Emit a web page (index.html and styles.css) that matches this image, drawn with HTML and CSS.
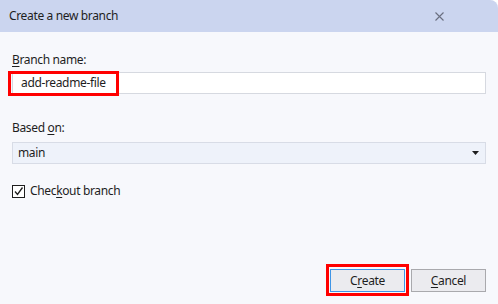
FILE: index.html
```html
<!DOCTYPE html>
<html>
<head>
<meta charset="utf-8">
<link rel="stylesheet" href="styles.css">
</head>
<body>
<div class="window">
  <div class="titlebar">
    <span class="title">Create a new branch</span>
    <svg class="close" width="9" height="9" viewBox="0 0 9 9"><path d="M0.5 0.5 L8.5 8.5 M8.5 0.5 L0.5 8.5" stroke="#6a6f80" stroke-width="1.1" fill="none"/></svg>
  </div>
  <div class="content">
    <div class="label first"><u>B</u>ranch name:</div>
    <div class="field-wrap">
      <div class="input">add-readme-file</div>
      <div class="highlight hl-input"></div>
    </div>
    <div class="label second">Based <u>o</u>n:</div>
    <div class="select">
      <span>main</span>
      <svg width="7" height="4" viewBox="0 0 7 4"><path d="M0 0 H7 L3.5 4 Z" fill="#1e1e1e"/></svg>
    </div>
    <label class="check">
      <span class="box"><svg width="11" height="11" viewBox="0 0 11 11"><path d="M2 5.5 L4.5 8.5 L9.5 1.5" stroke="#1e1e1e" stroke-width="1.3" fill="none"/></svg></span>
      <span>Chec<u>k</u>out branch</span>
    </label>
    <div class="spacer"></div>
    <div class="buttons">
      <div class="btn-wrap">
        <div class="btn primary">C<u>r</u>eate</div>
        <div class="highlight hl-btn"></div>
      </div>
      <div class="btn"><u>C</u>ancel</div>
    </div>
  </div>
</div>
</body>
</html>
```
FILE: styles.css
```css
html, body {
  margin: 0;
  padding: 0;
  background: #ffffff;
}
body {
  font-family: "Noto Sans", "Open Sans", sans-serif;
  font-size: 12px;
  letter-spacing: -0.35px;
  color: #1e1e1e;
}
.window {
  width: 498px;
  height: 304px;
  background: #f7f8fc;
  border-top-right-radius: 8px;
  overflow: hidden;
  display: flex;
  flex-direction: column;
}
.titlebar {
  height: 32px;
  flex: none;
  background: #cbd5ef;
  display: flex;
  align-items: center;
  justify-content: space-between;
  padding: 0 54px 0 9px;
}
.title {
  font-size: 12px;
  line-height: 16px;
}
.close {
  display: block;
}
.content {
  flex: 1;
  display: flex;
  flex-direction: column;
  padding: 0 12px 12px 12px;
}
.label {
  line-height: 16px;
}
.label.first {
  margin-top: 20px;
}
.label.second {
  margin-top: 26px;
}
u {
  text-decoration-thickness: 1px;
  text-underline-offset: 2px;
}
.field-wrap {
  position: relative;
  margin-top: 4px;
}
.input {
  height: 20px;
  border: 1px solid #d6d9e0;
  background: #ffffff;
  line-height: 20px;
  padding-left: 8px;
}
.highlight {
  position: absolute;
  border: 3px solid #ff0000;
  pointer-events: none;
}
.hl-input {
  left: -4px;
  top: -1px;
  width: 105px;
  height: 19px;
}
.select {
  margin-top: 6px;
  height: 20px;
  border: 1px solid #d8dce6;
  background: #eef2fa;
  display: flex;
  align-items: center;
  justify-content: space-between;
  padding: 0 6px 0 5px;
  line-height: 20px;
}
.check {
  margin-top: 19px;
  display: flex;
  align-items: center;
  gap: 5px;
  line-height: 16px;
}
.box {
  width: 11px;
  height: 11px;
  border: 1px solid #1e1e1e;
  background: #ffffff;
  display: block;
}
.box svg {
  display: block;
}
.spacer {
  flex: 1;
}
.buttons {
  display: flex;
  justify-content: flex-end;
  gap: 6px;
}
.btn-wrap {
  position: relative;
}
.btn {
  width: 73px;
  height: 21px;
  border: 1px solid #a9a9ad;
  background: #ebebef;
  display: flex;
  align-items: center;
  justify-content: center;
}
.btn.primary {
  border-color: #3f95e6;
}
.hl-btn {
  left: -4px;
  top: -5px;
  width: 77px;
  height: 26px;
}
```
